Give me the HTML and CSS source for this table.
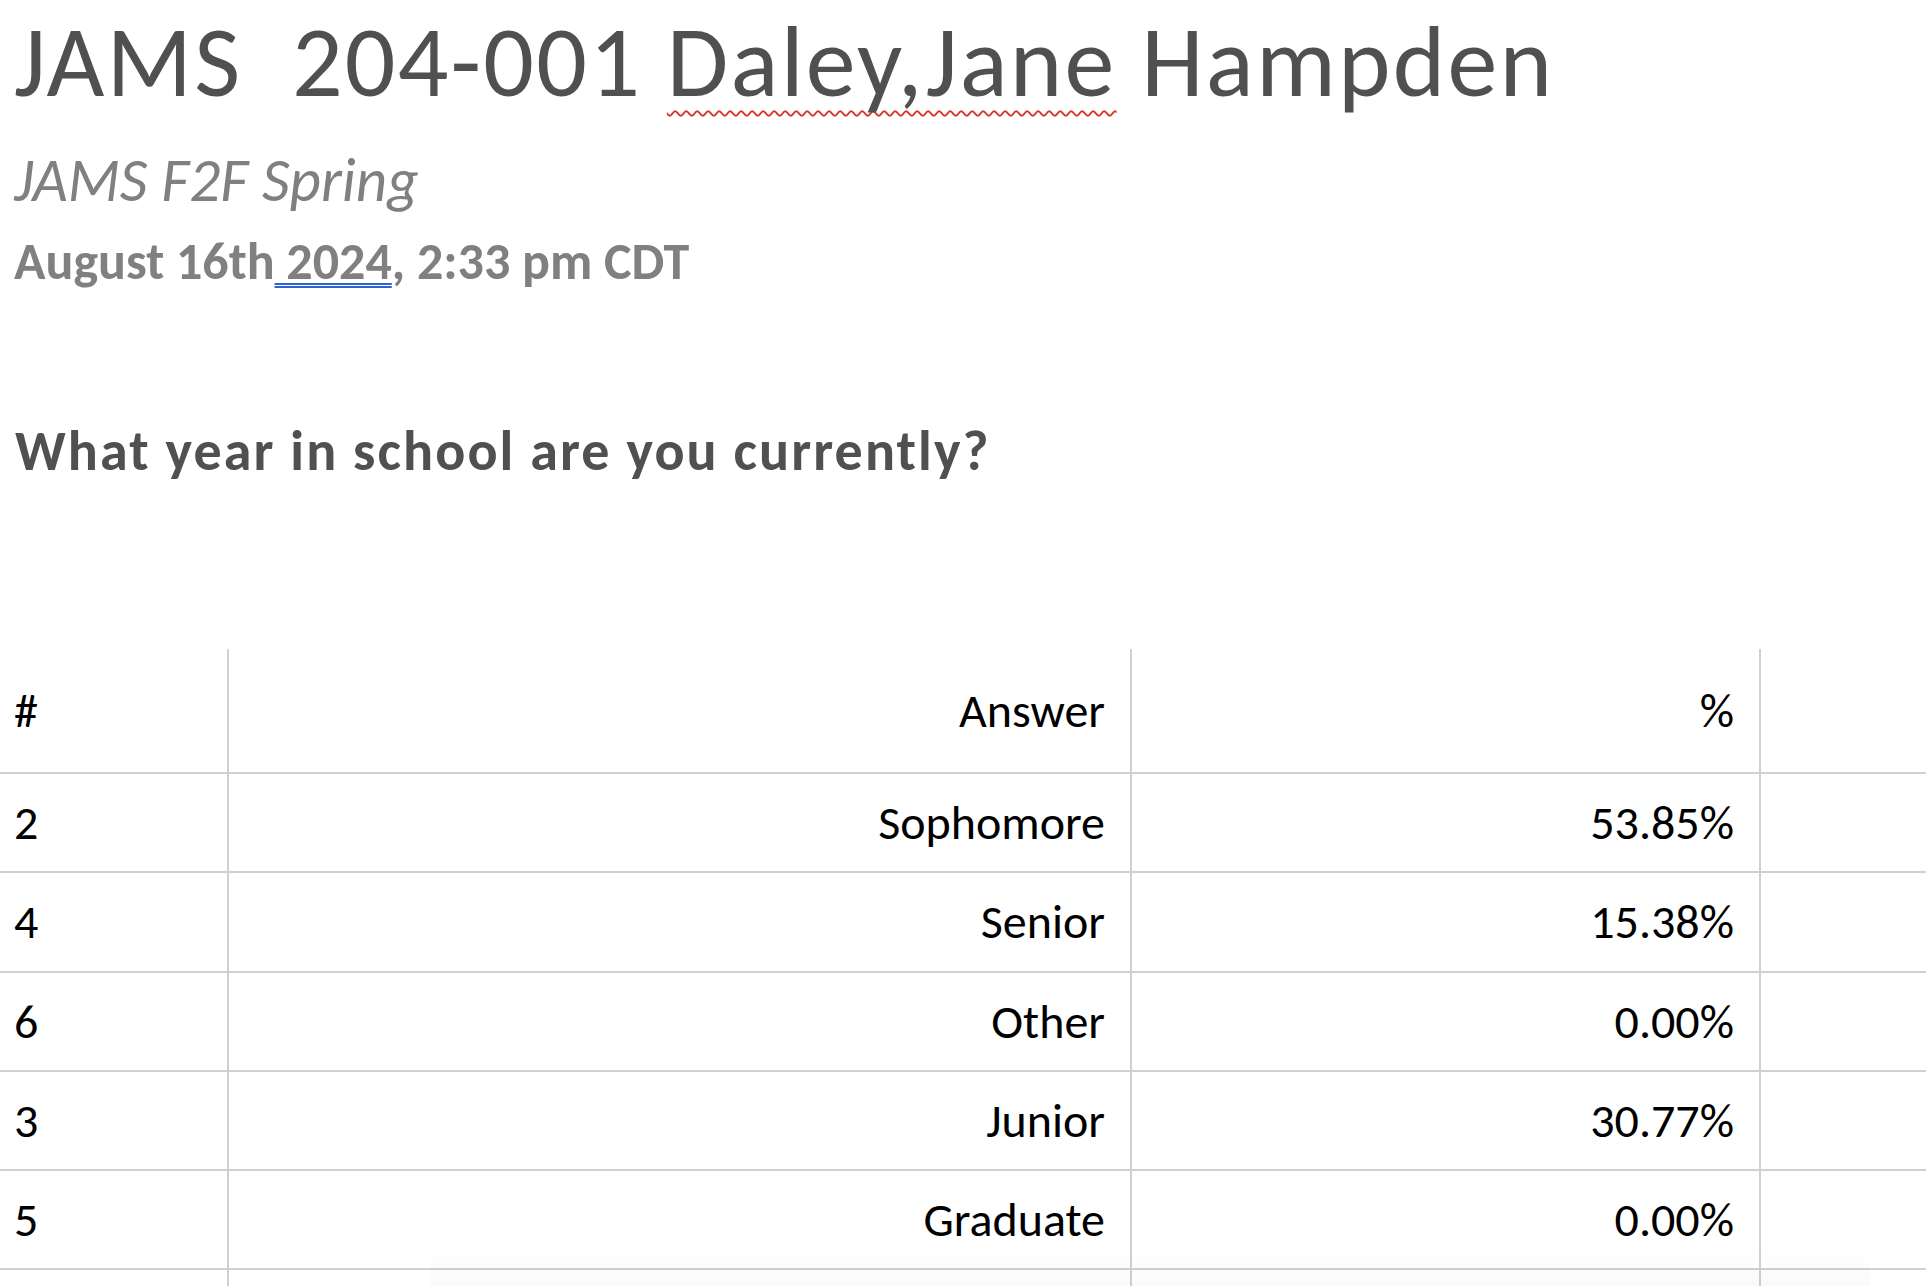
FILE: index.html
```html
<!DOCTYPE html>
<html>
<head>
<meta charset="utf-8">
<link rel="stylesheet" href="styles.css">
</head>
<body>
<div class="doc">
  <h1 class="title">JAMS&nbsp; 204-001 <span class="spell">Daley,Jane</span> Hampden</h1>
  <p class="subtitle">JAMS F2F Spring</p>
  <p class="date">August 16th<span class="grammar"> 2024</span>, 2:33 pm CDT</p>
  <h2 class="question">What year in school are you currently?</h2>
  <table class="results">
    <colgroup>
      <col class="w-num">
      <col class="w-ans">
      <col class="w-pct">
      <col>
    </colgroup>
    <thead>
      <tr class="head"><th class="c-num">#</th><th class="c-ans">Answer</th><th class="c-pct">%</th><th class="c-extra"></th></tr>
    </thead>
    <tbody>
      <tr><td class="c-num">2</td><td class="c-ans">Sophomore</td><td class="c-pct">53.85%</td><td class="c-extra"></td></tr>
      <tr><td class="c-num">4</td><td class="c-ans">Senior</td><td class="c-pct">15.38%</td><td class="c-extra"></td></tr>
      <tr><td class="c-num">6</td><td class="c-ans">Other</td><td class="c-pct">0.00%</td><td class="c-extra"></td></tr>
      <tr><td class="c-num">3</td><td class="c-ans">Junior</td><td class="c-pct">30.77%</td><td class="c-extra"></td></tr>
      <tr><td class="c-num">5</td><td class="c-ans">Graduate</td><td class="c-pct">0.00%</td><td class="c-extra"></td></tr>
      <tr class="cut"><td class="c-num"></td><td class="c-ans"></td><td class="c-pct"></td><td class="c-extra"></td></tr>
    </tbody>
  </table>
</div>
<div class="shade"></div>
</body>
</html>
```

FILE: styles.css
```css
html, body {
  margin: 0;
  padding: 0;
  background: #ffffff;
  overflow: hidden;
  height: 1286px;
}
.doc {
  font-family: Carlito, Lato, "Liberation Sans", sans-serif;
  color: #000;
}
.title {
  margin: 0;
  padding-left: 14px;
  font-size: 100px;
  font-weight: 400;
  letter-spacing: 2.2px;
  line-height: 125px;
  color: #505050;
  white-space: nowrap;
}
.spell {
  text-decoration: underline wavy #d9352b;
  text-decoration-thickness: 1.5px;
  text-underline-offset: 14px;
  text-decoration-skip-ink: none;
}
.subtitle {
  margin: 17px 0 0;
  padding-left: 14px;
  font-size: 61px;
  font-style: italic;
  line-height: 76px;
  color: #808080;
}
.date {
  margin: 12px 0 0;
  padding-left: 14px;
  font-size: 52px;
  font-weight: 700;
  line-height: 62px;
  color: #808080;
}
.grammar {
  text-decoration: underline double #2f62d3;
  text-decoration-thickness: 1.5px;
  text-underline-offset: 4px;
  text-decoration-skip-ink: none;
}
.question {
  margin: 126px 0 0;
  padding-left: 15px;
  font-size: 56px;
  font-weight: 700;
  letter-spacing: 2.1px;
  line-height: 66px;
  color: #505050;
}
.results {
  margin-top: 165px;
  width: 100%;
  border-collapse: collapse;
  table-layout: fixed;
  font-size: 48px;
  color: #000;
}
.w-num { width: 228px; }
.w-ans { width: 903px; }
.w-pct { width: 629px; }
.results th, .results td {
  font-weight: 400;
  padding: 0 25px 0 14px;
  border-left: 2px solid #d0d0d0;
  border-bottom: 2px solid #d0d0d0;
  vertical-align: middle;
  white-space: nowrap;
}
.results .c-num {
  border-left: none;
  text-align: left;
}
.results .c-ans,
.results .c-pct,
.results .c-extra {
  text-align: right;
}
.head th {
  height: 123px;
}
.results tbody td {
  height: 97.3px;
}
.results tr.cut td {
  border-bottom: none;
}
.shade {
  position: fixed;
  left: 430px;
  bottom: 0;
  width: 1440px;
  height: 36px;
  background: linear-gradient(to bottom, rgba(0, 0, 0, 0), rgba(0, 0, 0, 0.02));
  pointer-events: none;
}
```
